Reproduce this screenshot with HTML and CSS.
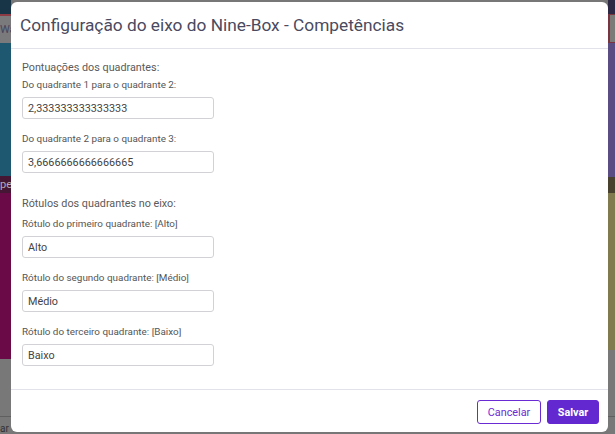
FILE: index.html
```html
<!DOCTYPE html>
<html lang="pt">
<head>
<meta charset="utf-8">
<title>Configuração do eixo do Nine-Box</title>
<link rel="stylesheet" href="styles.css">
</head>
<body>
<div class="app">
  <div class="side side-left">
    <div class="band b-top-l"></div>
    <div class="band b-box-l"><span>Wa</span></div>
    <div class="band b-teal"></div>
    <div class="band b-dark-l"><span>pe</span></div>
    <div class="band b-magenta"></div>
    <div class="band b-grey"></div>
    <div class="band b-grey-foot"><span>ar</span></div>
  </div>
  <div class="middle"></div>
  <div class="side side-right">
    <div class="band b-top-r"></div>
    <div class="band b-box-r"></div>
    <div class="band b-purple"></div>
    <div class="band b-dark-r"></div>
    <div class="band b-olive"></div>
    <div class="band b-grey-r"></div>
    <div class="band b-grey-foot"></div>
  </div>
</div>

<div class="modal">
  <header class="modal-header">
    <h1 class="modal-title">Configuração do eixo do Nine-Box - Competências</h1>
  </header>
  <div class="modal-body">
    <section class="group">
      <p class="group-title">Pontuações dos quadrantes:</p>
      <div class="field">
        <label class="field-label">Do quadrante 1 para o quadrante 2:</label>
        <input class="field-input" type="text" value="2,333333333333333">
      </div>
      <div class="field">
        <label class="field-label">Do quadrante 2 para o quadrante 3:</label>
        <input class="field-input" type="text" value="3,6666666666666665">
      </div>
    </section>
    <section class="group group-labels">
      <p class="group-title">Rótulos dos quadrantes no eixo:</p>
      <div class="field">
        <label class="field-label">Rótulo do primeiro quadrante: [Alto]</label>
        <input class="field-input" type="text" value="Alto">
      </div>
      <div class="field">
        <label class="field-label">Rótulo do segundo quadrante: [Médio]</label>
        <input class="field-input" type="text" value="Médio">
      </div>
      <div class="field">
        <label class="field-label">Rótulo do terceiro quadrante: [Baixo]</label>
        <input class="field-input" type="text" value="Baixo">
      </div>
    </section>
  </div>
  <footer class="modal-footer">
    <button class="btn btn-outline" type="button">Cancelar</button>
    <button class="btn btn-primary" type="button">Salvar</button>
  </footer>
</div>
</body>
</html>
```

FILE: styles.css
```css
* { box-sizing: border-box; }

html, body {
  margin: 0;
  padding: 0;
  width: 615px;
  height: 434px;
  overflow: hidden;
  font-family: Roboto, "Liberation Sans", sans-serif;
}

.app {
  display: flex;
  width: 615px;
  height: 434px;
  background: #777;
}

.side {
  display: flex;
  flex-direction: column;
}
.side-left { width: 11px; }
.side-right { width: 7px; }
.middle { flex: 1; background: #777; }

.band { overflow: hidden; white-space: nowrap; font-size: 11px; color: #b9b9c4; }

.b-top-l { height: 14px; background: #183447; }
.b-box-l { height: 29px; background: #7a7a7d; border-top: 2px solid #8c3a44; color: #45455e; padding: 7px 0 0 0; font-size: 11px; }
.b-teal { height: 133px; background: #1e5770; }
.b-dark-l { height: 17px; background: #451734; color: #b8a9b6; padding-top: 2px; }
.b-magenta { height: 166px; background: #6a0b47; }
.b-grey { height: 58px; background: #787878; border-bottom: 1px solid #5f5f5f; }
.b-grey-foot { flex: 1; background: #787878; color: #333; font-size: 10px; padding-top: 6px; }

.b-top-r { height: 14px; background: #2d2944; }
.b-box-r { height: 29px; background: #7a7a78; border-left: 2px solid #7a3440; border-top: 1px solid #7a3440; border-bottom: 1px solid #7a3440; }
.b-purple { height: 134px; background: #5a4d84; }
.b-dark-r { height: 16px; background: #48412e; }
.b-olive { height: 157px; background: #817a4e; }
.b-grey-r { height: 67px; background: #787878; border-bottom: 1px solid #5f5f5f; }

.modal {
  position: absolute;
  left: 11px;
  top: 2px;
  width: 597px;
  height: 430px;
  background: #fff;
  border-radius: 6px;
  display: flex;
  flex-direction: column;
}

.modal-header {
  height: 47px;
  border-bottom: 1px solid #e2e2ea;
  padding: 0 9px;
  display: flex;
  align-items: center;
}

.modal-title {
  margin: 0;
  font-family: Roboto, "Liberation Sans", sans-serif;
  font-weight: 400;
  font-size: 17.3px;
  color: #4a4a60;
}

.modal-body {
  flex: 1;
  padding: 12px 11px 0 11px;
}

.group-title {
  margin: 0 0 4px 0;
  font-size: 10.8px;
  line-height: 14px;
  color: #5a5a5a;
}

.group-labels { margin-top: 24px; }
.group-labels .group-title { margin-bottom: 7px; }

.field {
  display: flex;
  flex-direction: column;
  align-items: flex-start;
  gap: 6px;
  margin-bottom: 14px;
}
.field:last-child { margin-bottom: 0; }

.field-label {
  font-size: 9.9px;
  line-height: 12px;
  color: #555;
}

.field-input {
  width: 192px;
  height: 22px;
  border: 1px solid #d2d2d6;
  border-radius: 3px;
  padding: 0 5px;
  font-family: Roboto, "Liberation Sans", sans-serif;
  font-size: 10.8px;
  color: #444;
  background: #fff;
  outline: none;
}

.modal-footer {
  border-top: 1px solid #e2e2ea;
  padding: 10px 9px 8px 0;
  display: flex;
  justify-content: flex-end;
  gap: 6px;
}

.btn {
  height: 24px;
  border-radius: 3px;
  font-family: Roboto, "Liberation Sans", sans-serif;
  font-size: 10.8px;
  padding: 0;
  cursor: pointer;
}

.btn-outline {
  width: 64px;
  background: #fff;
  border: 1px solid #6a2bd4;
  color: #6a2bd4;
}

.btn-primary {
  width: 52px;
  background: #6328d0;
  border: 1px solid #6328d0;
  color: #fff;
  font-weight: 700;
}
```
